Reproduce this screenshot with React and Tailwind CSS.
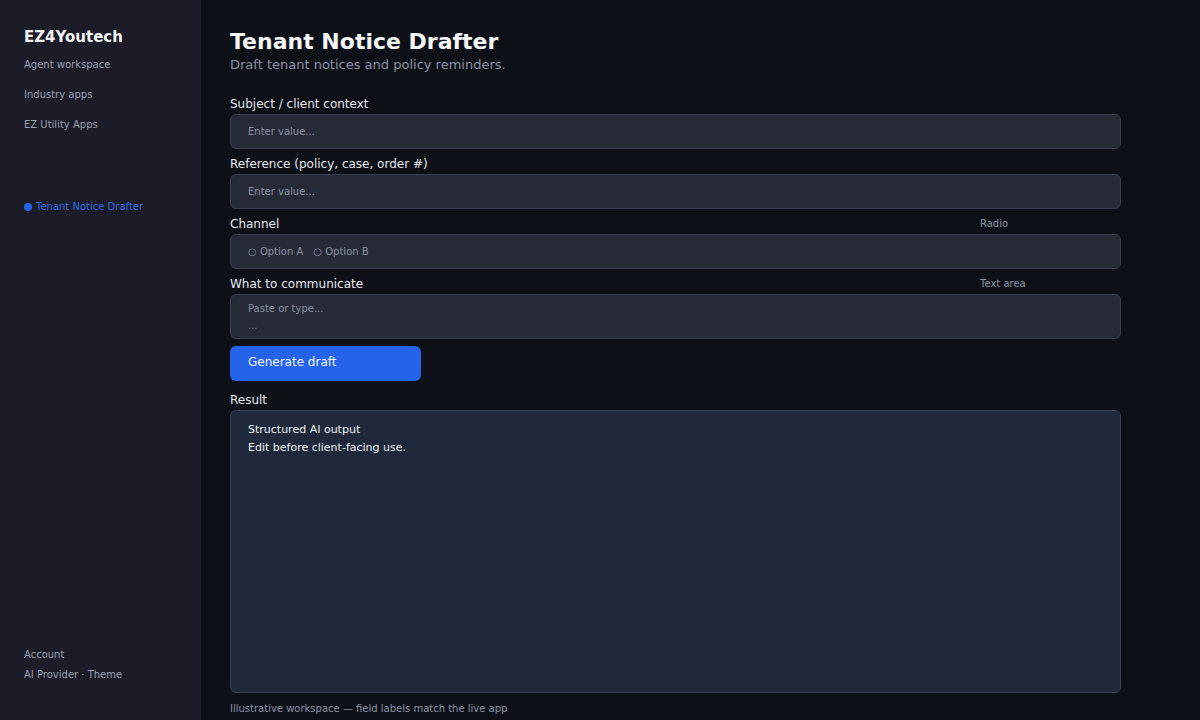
import React from 'react';

const font = { fontFamily: '"DejaVu Sans", "Liberation Sans", sans-serif' };

const Field = ({ label, hint, children }) => (
  <div className="flex flex-col">
    <div className="flex h-[17px] items-center mb-[2px]">
      <span className="w-[750px] text-[12px] text-[#e6e8ee]">{label}</span>
      {hint && <span className="text-[10px] text-[#8c93a5]">{hint}</span>}
    </div>
    {children}
  </div>
);

const App = () => {
  const nav = ['Agent workspace', 'Industry apps', 'EZ Utility Apps'];

  return (
    <div className="flex h-[720px] w-full bg-[#0e1018]" style={font}>
      {/* Sidebar */}
      <aside className="flex w-[201px] shrink-0 flex-col bg-[#1b1c28] pl-[24px] pt-[27px] pb-[38px]">
        <div className="h-[20px] text-[15px] font-bold leading-[20px] text-[#f3f4f7]">EZ4Youtech</div>
        <nav className="mt-[11px] flex flex-col gap-[16px]">
          {nav.map((item) => (
            <a key={item} className="h-[14px] text-[10px] leading-[14px] text-[#9aa0b0]">{item}</a>
          ))}
        </nav>
        <div className="mt-[68px] flex h-[14px] items-center gap-[4px] text-[10px] leading-[14px] text-[#2f6be0]">
          <span className="inline-block h-[8px] w-[8px] rounded-full bg-[#2563eb]"></span>
          Tenant Notice Drafter
        </div>
        <div className="mt-auto flex flex-col gap-[6px]">
          <span className="h-[14px] text-[10px] leading-[14px] text-[#9aa0b0]">Account</span>
          <span className="h-[14px] text-[10px] leading-[14px] text-[#9aa0b0]">AI Provider · Theme</span>
        </div>
      </aside>

      {/* Main */}
      <main className="flex-1 pl-[29px] pt-[28px]">
        <div className="w-[891px]">
          <h1 className="h-[28px] text-[22px] font-bold leading-[28px] text-[#f5f6f8]">Tenant Notice Drafter</h1>
          <p className="h-[18px] text-[13px] leading-[18px] text-[#8c93a5]">Draft tenant notices and policy reminders.</p>

          <div className="mt-[21px] flex flex-col gap-[6px]">
            <Field label="Subject / client context">
              <div className="flex h-[35px] items-center rounded-md border border-[#3a3f4e] bg-[#262a36] px-[17px] text-[10px] text-[#8c93a5]">
                Enter value...
              </div>
            </Field>
            <Field label="Reference (policy, case, order #)">
              <div className="flex h-[35px] items-center rounded-md border border-[#3a3f4e] bg-[#262a36] px-[17px] text-[10px] text-[#8c93a5]">
                Enter value...
              </div>
            </Field>
            <Field label="Channel" hint="Radio">
              <div className="flex h-[35px] items-center gap-[10px] rounded-md border border-[#3a3f4e] bg-[#262a36] px-[17px] text-[10px] text-[#8c93a5]">
                <span>○ Option A</span>
                <span>○ Option B</span>
              </div>
            </Field>
            <Field label="What to communicate" hint="Text area">
              <div className="flex h-[45px] flex-col rounded-md border border-[#3a3f4e] bg-[#262a36] px-[17px] pt-[5px] text-[10px] leading-[17px] text-[#8c93a5]">
                <span>Paste or type...</span>
                <span className="text-[#6b7283]">...</span>
              </div>
            </Field>
          </div>

          <button className="mt-[7px] flex h-[35px] w-[191px] items-center rounded-md bg-[#2563eb] px-[18px] pb-[3px] text-[12px] text-[#f3f6ff]">
            Generate draft
          </button>

          <div className="mt-[10px]">
            <Field label="Result">
              <div className="flex h-[283px] flex-col rounded-md border border-[#3a4152] bg-[#1f293b] px-[17px] pt-[10px] text-[11px] leading-[18px] text-[#eef0f4]">
                <span>Structured AI output</span>
                <span>Edit before client-facing use.</span>
              </div>
            </Field>
          </div>

          <p className="mt-[9px] h-[14px] text-[10px] leading-[14px] text-[#8c93a5]">
            Illustrative workspace — field labels match the live app
          </p>
        </div>
      </main>
    </div>
  );
};

export default App;
